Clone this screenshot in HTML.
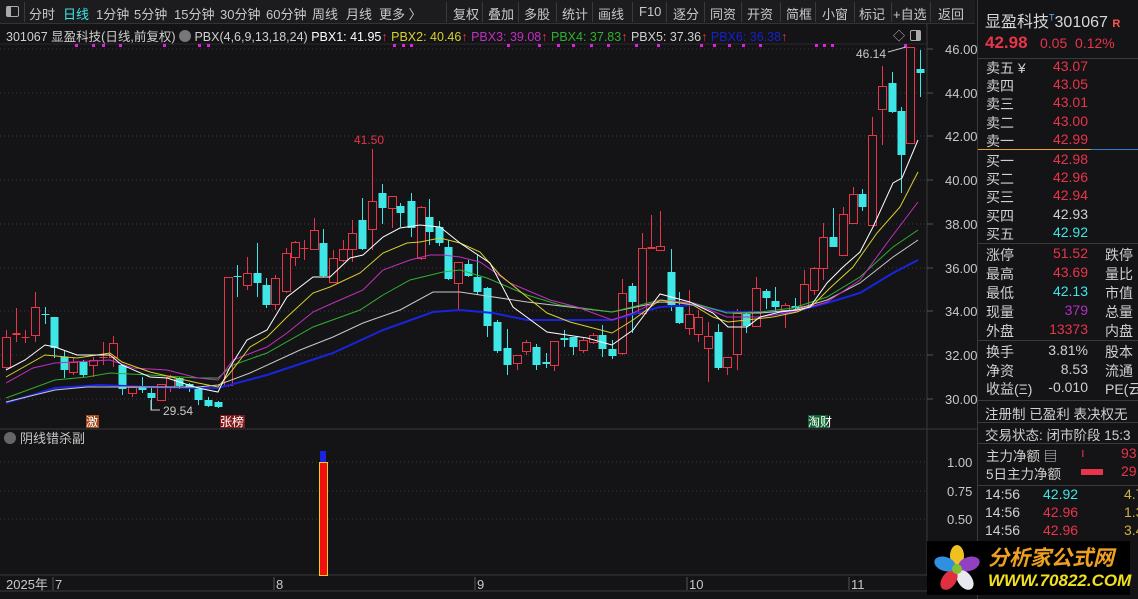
<!DOCTYPE html>
<html><head><meta charset="utf-8">
<style>
*{margin:0;padding:0;box-sizing:border-box}
body{width:1138px;height:599px;background:#141315;overflow:hidden;position:relative;font-family:"Liberation Sans","Noto Sans CJK SC",sans-serif;color:#c8c8c8;font-size:13px}
.a{position:absolute;white-space:nowrap}
#tb{position:absolute;left:0;top:0;width:975px;height:24px;background:#1c1c1e;border-bottom:1px solid #333}
#tb span{position:absolute;top:4px;font-size:13px;color:#c8c8c8}
.sep{position:absolute;top:2px;width:1px;height:20px;background:#3a3a3a}
#rp{position:absolute;left:977px;top:0;width:161px;height:599px;background:#141315;border-left:1px solid #3a3a3a}
.hl{position:absolute;left:0;width:161px;height:1px;background:#3a3a3a}
.r{color:#e8354a}.c{color:#3fe6e6}.w{color:#d0d0d0}.m{color:#b030c0}
</style></head><body>
<div id="tb">
<div style="position:absolute;left:6px;top:6px;width:13px;height:11px;border:1px solid #aaa;border-radius:2px"><div style="width:4px;height:9px;background:#aaa"></div></div>
<div class="sep" style="left:24px"></div>
<span style="left:29px">分时</span><span style="left:63px;color:#3fe6e6">日线</span><span style="left:96px">1分钟</span><span style="left:134px">5分钟</span><span style="left:174px">15分钟</span><span style="left:220px">30分钟</span><span style="left:266px">60分钟</span><span style="left:312px">周线</span><span style="left:346px">月线</span><span style="left:379px">更多 〉</span>
<div class="sep" style="left:446px"></div><span style="left:453px">复权</span>
<div class="sep" style="left:482px"></div><span style="left:488px">叠加</span>
<div class="sep" style="left:518px"></div><span style="left:524px">多股</span>
<div class="sep" style="left:556px"></div><span style="left:562px">统计</span>
<div class="sep" style="left:592px"></div><span style="left:598px">画线</span>
<div class="sep" style="left:632px"></div><span style="left:639px">F10</span>
<div class="sep" style="left:666px"></div><span style="left:673px">逐分</span>
<div class="sep" style="left:704px"></div><span style="left:710px">同资</span>
<div class="sep" style="left:741px"></div><span style="left:747px">开资</span>
<div class="sep" style="left:780px"></div><span style="left:786px">简框</span>
<div class="sep" style="left:815px"></div><span style="left:822px">小窗</span>
<div class="sep" style="left:854px"></div><span style="left:859px">标记</span>
<div class="sep" style="left:891px"></div><span style="left:893px">+自选</span>
<div class="sep" style="left:930px"></div><span style="left:938px">返回</span>
</div>
<div class="a" style="left:6px;top:26px;font-size:12.5px;color:#d0d0d0">301067 显盈科技(日线,前复权) <span style="display:inline-block;width:12px;height:12px;border-radius:6px;background:#777;vertical-align:-1px"></span> PBX(4,6,9,13,18,24) <span style="color:#fff">PBX1: 41.95</span><span class="r">↑</span> <span style="color:#d8d030">PBX2: 40.46</span><span class="r">↑</span> <span style="color:#c030c0">PBX3: 39.08</span><span class="r">↑</span> <span style="color:#30b030">PBX4: 37.83</span><span class="r">↑</span> <span style="color:#d0d0d0">PBX5: 37.36</span><span class="r">↑</span> <span style="color:#1820d0">PBX6: 36.38</span><span class="r">↑</span></div>
<div class="a" style="left:893px;top:27px;font-size:12px;color:#bbb">◇</div>
<div style="position:absolute;left:910px;top:30px;width:11px;height:11px;border:1px solid #aaa;border-radius:2px"><div style="width:4px;height:9px;margin-left:5px;background:#aaa"></div></div>
<svg id="ch" width="977" height="599" style="position:absolute;left:0;top:0" xmlns="http://www.w3.org/2000/svg"></svg>
<div id="rp">
<div class="a" style="left:7px;top:8px;font-size:16px;color:#d8d8d8">显盈科技<sup style="font-size:9px;color:#6af">T</sup>301067 <span style="font-size:11px;color:#f55;font-weight:bold">R</span></div>
<div class="a r" style="left:7px;top:33px;font-size:17px;font-weight:bold">42.98</div>
<div class="a r" style="left:62px;top:35px;font-size:14px">0.05&nbsp;&nbsp;0.12%</div>
<div class="hl" style="top:58px"></div>
<div id="ob"></div>
</div>
<div style="position:absolute;left:927px;top:541px;width:203px;height:54px;background:#000"></div>
<svg width="60" height="56" style="position:absolute;left:928px;top:540px">
<g transform="translate(29,29)">
<ellipse cx="0" cy="-13" rx="7" ry="11" fill="#f0c020"/>
<ellipse cx="12" cy="-5" rx="7" ry="11" fill="#9040c0" transform="rotate(72 12 -5)"/>
<ellipse cx="8" cy="11" rx="7" ry="11" fill="#e8e8f0" transform="rotate(144 8 11)"/>
<ellipse cx="-8" cy="11" rx="7" ry="11" fill="#e03040" transform="rotate(-144 -8 11)"/>
<ellipse cx="-12" cy="-5" rx="7" ry="11" fill="#3090e0" transform="rotate(-72 -12 -5)"/>
<circle r="5" fill="#80c030"/></g></svg>
<div class="a" style="left:988px;top:542px;font-size:21px;font-weight:bold;font-style:italic;color:#f0a020">分析家公式网</div>
<div class="a" style="left:988px;top:571px;font-size:17px;font-weight:bold;font-style:italic;color:#f0e020">WWW.70822.COM</div>
<script>
const svg=document.getElementById('ch');let h='';
h+='<line x1="927" y1="24" x2="927" y2="576" stroke="#3a3a3a"/>';
h+='<line x1="0" y1="44" x2="927" y2="44" stroke="#2a2a2a"/>';
const pl=[[49,'46.00'],[93,'44.00'],[136,'42.00'],[180,'40.00'],[224,'38.00'],[268,'36.00'],[311,'34.00'],[355,'32.00'],[399,'30.00']];
pl.forEach(p=>{h+=`<line x1="0" y1="${p[0]}" x2="927" y2="${p[0]}" stroke="#3a3a3a" stroke-dasharray="1,3"/><line x1="927" y1="${p[0]}" x2="933" y2="${p[0]}" stroke="#555"/><text x="945" y="${p[0]+5}" fill="#c8c8c8" font-size="13" font-family="Liberation Sans">${p[1]}</text>`});
h+='<line x1="0" y1="429" x2="977" y2="429" stroke="#3a3a3a"/><line x1="0" y1="575" x2="977" y2="575" stroke="#3a3a3a"/><line x1="0" y1="591" x2="977" y2="591" stroke="#3a3a3a"/>';
[[462,'1.00'],[491,'0.75'],[519,'0.50']].forEach(p=>{h+=`<line x1="0" y1="${p[0]}" x2="927" y2="${p[0]}" stroke="#3a3a3a" stroke-dasharray="1,3"/><text x="947" y="${p[0]+5}" fill="#c8c8c8" font-size="13" font-family="Liberation Sans">${p[1]}</text>`});
const C=[[6,337,367,330,370,1],[16,333,335,308,342,1],[25,337,338,330,343,1],[35,307,335,292,342,1],[45,314,315,307,324,0],[54,317,348,317,358,0],[64,357,370,350,378,0],[73,362,372,358,375,1],[83,362,375,360,377,0],[93,360,365,357,377,1],[103,357,358,342,365,1],[113,343,357,336,367,1],[122,365,389,365,395,0],[132,387,393,387,397,1],[142,387,390,377,393,0],[151,393,398,387,410,0],[161,384,400,384,401,1],[170,377,387,375,392,1],[179,378,386,377,389,0],[189,384,387,383,392,0],[198,388,400,387,405,0],[208,400,406,397,407,0],[218,402,407,401,408,0],[228,277,385,277,387,1],[237,276,277,265,297,0],[247,273,285,257,290,1],[257,273,283,243,297,0],[266,285,305,278,308,0],[275,278,304,275,310,1],[286,253,291,248,293,1],[295,242,257,241,266,1],[304,248,249,240,260,1],[314,230,249,218,250,1],[323,243,276,229,277,0],[333,258,282,250,283,1],[343,249,260,240,262,1],[352,233,249,220,262,1],[362,220,249,198,250,0],[372,201,229,149,250,1],[382,193,208,184,224,0],[392,196,208,196,228,1],[400,206,213,203,227,0],[411,201,228,193,237,0],[421,207,258,206,260,1],[429,217,232,199,245,0],[439,227,243,221,246,0],[448,247,279,240,280,0],[458,262,283,262,310,1],[468,264,276,260,277,0],[477,277,292,255,295,0],[487,288,326,287,337,0],[497,322,351,320,353,0],[507,348,365,329,375,0],[517,355,363,355,370,1],[526,342,351,340,355,1],[536,347,365,344,370,0],[546,362,364,353,368,0],[554,341,365,341,371,1],[564,338,340,330,347,0],[573,337,347,337,355,0],[583,340,350,337,353,1],[593,335,342,333,344,1],[602,335,349,325,357,0],[612,349,356,340,359,0],[622,293,353,279,355,1],[632,286,302,283,333,0],[642,248,313,233,315,1],[651,247,249,215,249,1],[660,246,250,211,251,1],[671,272,305,249,311,0],[679,307,323,292,324,0],[689,314,328,290,335,1],[698,317,334,310,342,1],[708,336,348,322,382,1],[718,332,368,324,370,0],[727,357,367,357,375,1],[737,313,354,309,370,1],[746,314,326,313,333,0],[756,288,326,277,327,1],[766,291,298,289,309,0],[775,301,307,287,313,0],[785,305,310,303,328,1],[795,306,308,298,312,0],[804,284,306,270,308,1],[814,268,290,267,295,1],[823,237,268,223,280,1],[833,237,247,208,247,0],[843,214,255,207,255,1],[853,194,223,187,224,1],[862,194,207,189,211,0],[872,135,225,117,226,1],[882,86,109,66,145,1],[892,83,112,72,113,0],[901,111,155,107,193,0],[910,47,143,47,143,1],[920,69,73,50,97,0]];
C.forEach(c=>{const col=c[5]?'#e8354a':'#3fe6e6';const bh=Math.max(1,c[2]-c[1]);
h+=`<line x1="${c[0]+.5}" y1="${c[3]}" x2="${c[0]+.5}" y2="${c[4]}" stroke="${col}"/>`;
if(c[5]&&bh>2)h+=`<rect x="${c[0]-3.5}" y="${c[1]+.5}" width="8" height="${bh}" fill="#141315" stroke="${col}"/>`;
else h+=`<rect x="${c[0]-3.5}" y="${c[1]}" width="8" height="${bh}" fill="${col}"/>`;});
const L=(pts,col,w)=>{h+=`<polyline fill="none" stroke="${col}" stroke-width="${w||1}" points="${pts}"/>`};
L("6,403 55,388 100,385 150,387 198,388 218,388 267,375 333,353 383,330 433,312 460,310 493,313 527,320 612,320 660,307 693,305 727,312 760,312 793,312 827,303 860,293 893,273 918,260","#1a24e0",2);
L("6,402 55,390 87,387 150,387 198,387 218,385 250,373 300,350 333,337 363,323 400,310 433,292 460,292 527,302 612,312 660,302 693,303 727,313 760,313 793,310 827,300 860,283 893,257 918,240","#c8c8c8");
L("6,398 55,380 87,377 110,373 150,375 198,378 218,378 233,365 267,353 313,327 360,310 383,295 410,280 443,272 460,270 487,278 527,295 560,305 612,312 660,300 693,303 727,313 760,312 793,308 827,297 860,277 893,247 918,230","#30b030");
L("6,383 33,368 55,363 110,360 133,368 167,370 198,378 218,380 233,360 267,347 287,333 313,312 333,303 363,290 383,270 410,260 430,255 443,255 460,257 480,262 510,283 550,300 577,307 612,320 633,313 660,300 693,303 727,317 760,317 793,312 827,302 860,280 887,243 918,202","#c030c0");
L("6,377 45,355 77,358 110,353 122,362 150,372 198,383 218,387 230,373 250,347 267,337 287,317 313,293 330,287 360,273 383,253 407,243 420,242 440,238 460,243 480,252 500,275 527,297 547,313 570,322 593,328 612,333 633,320 660,300 693,305 713,317 728,322 747,320 773,317 797,312 813,305 830,288 853,267 877,233 900,207 918,172","#d8d030");
L("6,370 25,360 45,345 55,347 77,355 110,355 122,365 150,377 167,378 198,388 218,392 230,367 247,340 267,330 287,297 313,277 330,277 350,258 363,255 383,237 400,228 420,225 440,227 460,243 490,263 513,307 547,332 587,338 612,345 633,330 660,294 690,302 713,313 728,327 747,327 760,317 780,312 797,310 810,307 827,283 843,267 860,252 873,227 893,183 902,178 918,140","#ffffff");
[75,92,102,119,163,198,207,393,402,410,507,538,557,572,590,607,635,657,700,713,728,742,759,815,823,831,904].forEach(x=>{h+=`<rect x="${x}" y="44" width="3" height="3" fill="#e020e0"/>`});
h+='<text x="354" y="144" fill="#e8354a" font-size="12" font-family="Liberation Sans">41.50</text>';
h+='<text x="856" y="58" fill="#c8c8c8" font-size="12" font-family="Liberation Sans">46.14</text><line x1="888" y1="52" x2="906" y2="47" stroke="#ccc"/>';
h+='<polyline points="151,400 151,410 160,410" fill="none" stroke="#ccc"/><text x="163" y="415" fill="#c8c8c8" font-size="12" font-family="Liberation Sans">29.54</text>';
h+='<rect x="86" y="415" width="13" height="13" fill="#a04818"/><text x="86" y="426" fill="#fff" font-size="12" font-family="Noto Sans CJK SC">激</text>';
h+='<rect x="220" y="415" width="25" height="13" fill="#801818"/><text x="220" y="426" fill="#fff" font-size="12" font-family="Noto Sans CJK SC">张榜</text>';
h+='<rect x="808" y="415" width="20" height="13" fill="#106030"/><text x="808" y="426" fill="#fff" font-size="12" font-family="Noto Sans CJK SC">淘财</text>';
h+='<circle cx="10" cy="438" r="6" fill="#666"/><text x="20" y="443" fill="#c8c8c8" font-size="13" font-family="Noto Sans CJK SC">阴线错杀副</text>';
h+='<rect x="320" y="451" width="6" height="11" fill="#1a24e0"/><rect x="319.5" y="462.5" width="8" height="113" fill="#f01010" stroke="#f0d020"/>';
h+='<text x="6" y="589" fill="#c8c8c8" font-size="13" font-family="Liberation Sans,Noto Sans CJK SC">2025年</text>';
[[54,'7'],[275,'8'],[476,'9'],[688,'10'],[850,'11']].forEach(t=>{h+=`<line x1="${t[0]-1}" y1="577" x2="${t[0]-1}" y2="590" stroke="#555"/><text x="${t[0]+1}" y="589" fill="#c8c8c8" font-size="13" font-family="Liberation Sans">${t[1]}</text>`});
svg.innerHTML=h;
let o='';const R=(y,l,v,cl,x2)=>{o+=`<div class="a" style="left:8px;top:${y-9}px;font-size:14px;color:#d0d0d0">${l}</div><div class="a ${cl}" style="right:${x2||50}px;top:${y-9}px;font-size:14px">${v}</div>`};
[['卖五 ¥','43.07','r'],['卖四','43.05','r'],['卖三','43.01','r'],['卖二','43.00','r'],['卖一','42.99','r']].forEach((r,i)=>R(67+i*18.2,r[0],r[1],r[2]));
o+='<div class="hl" style="top:149px;background:linear-gradient(90deg,#e8a030 70%,#3080d0 70%)"></div>';
[['买一','42.98','r'],['买二','42.96','r'],['买三','42.94','r'],['买四','42.93','w'],['买五','42.92','c']].forEach((r,i)=>R(160+i*18.2,r[0],r[1],r[2]));
o+='<div class="hl" style="top:243px"></div>';
[['涨停','51.52','r','跌停'],['最高','43.69','r','量比'],['最低','42.13','c','市值'],['现量','379','m','总量'],['外盘','13373','r','内盘']].forEach((r,i)=>{R(254+i*19,r[0],r[1],r[2]);o+=`<div class="a" style="left:127px;top:${245+i*19}px;font-size:14px;color:#d0d0d0">${r[3]}</div>`});
o+='<div class="hl" style="top:340px"></div>';
[['换手','3.81%','股本'],['净资','8.53','流通'],['收益(Ξ)','-0.010','PE(云']].forEach((r,i)=>{R(351+i*18.5,r[0],r[1],'w');o+=`<div class="a" style="left:127px;top:${342+i*18.5}px;font-size:14px;color:#d0d0d0">${r[2]}</div>`});
o+='<div class="hl" style="top:400px"></div><div class="a" style="left:7px;top:403px;font-size:13.5px;color:#d0d0d0">注册制 已盈利 表决权无</div>';
o+='<div class="hl" style="top:422px"></div><div class="a" style="left:7px;top:424px;font-size:13.5px;color:#d0d0d0">交易状态: 闭市阶段 15:3</div>';
o+='<div class="hl" style="top:443px"></div><div class="a" style="left:8px;top:445px;font-size:13.5px;color:#d0d0d0">主力净额 ▤</div><div class="a r" style="left:103px;top:445px;font-size:13px">ı</div><div class="a r" style="left:143px;top:445px;font-size:14px">93</div>';
o+='<div class="a" style="left:8px;top:463px;font-size:13.5px;color:#d0d0d0">5日主力净额</div><div style="position:absolute;left:103px;top:469px;width:22px;height:6px;background:#e8354a"></div><div class="a r" style="left:143px;top:463px;font-size:14px">29</div>';
o+='<div class="hl" style="top:485px"></div>';
[['42.92','c','4.7','#d0b040'],['42.96','r','1.3','#d0b040'],['42.96','r','3.4','#d0b040']].forEach((r,i)=>{o+=`<div class="a" style="left:7px;top:${486+i*18}px;font-size:14px;color:#d0d0d0">14:56</div><div class="a ${r[1]}" style="left:65px;top:${486+i*18}px;font-size:14px">${r[0]}</div><div class="a" style="left:146px;top:${486+i*18}px;font-size:14px;color:${r[3]}">${r[2]}</div>`});
document.getElementById('ob').innerHTML=o;
</script>
</body></html>
